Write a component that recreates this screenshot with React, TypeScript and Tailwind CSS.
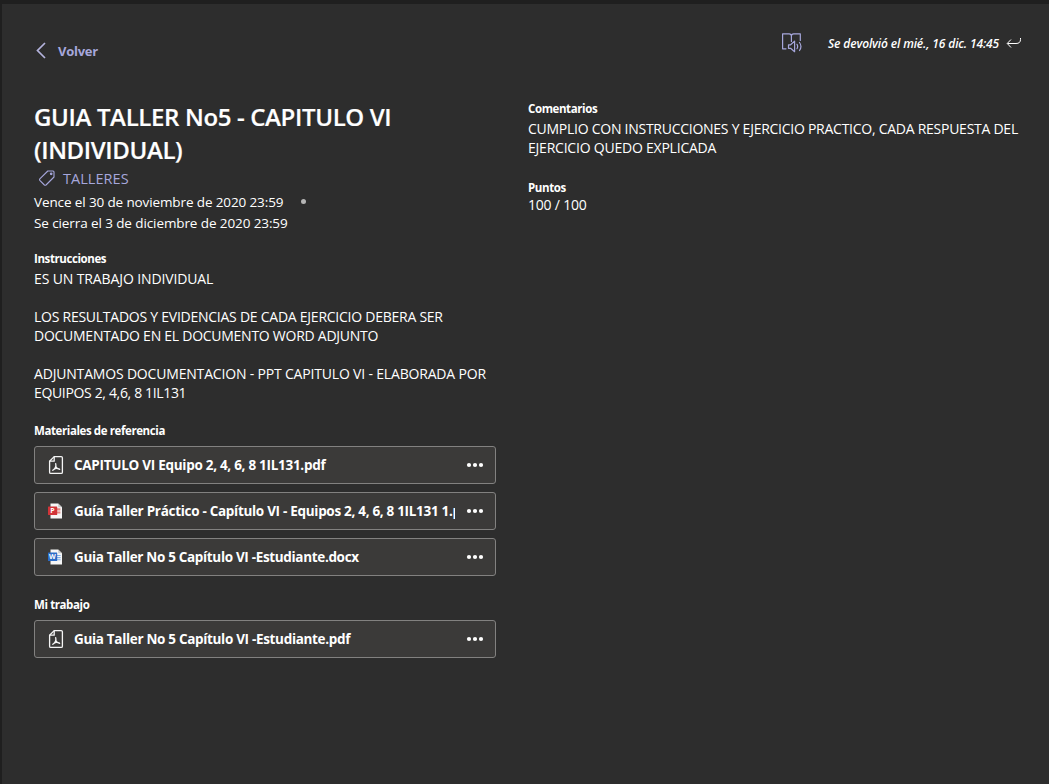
import type { ReactNode } from "react";

function Line({ children, className = "" }: { children?: ReactNode; className?: string }) {
  return (
    <div className="h-[19px] whitespace-nowrap">
      <span className={className}>{children}</span>
    </div>
  );
}

function Label({ children }: { children: ReactNode }) {
  return <h2 className="h-4 whitespace-nowrap text-[11.5px] leading-[15px] font-bold tracking-[-0.4px]">{children}</h2>;
}

function PdfIcon() {
  return (
    <svg width="16" height="20" viewBox="0 0 16 20" fill="none" stroke="#f5f5f5" strokeWidth="1.3" strokeLinejoin="round" strokeLinecap="round">
      <path d="M6.2 1.6H13.2Q14.4 1.6 14.4 2.8V17.2Q14.4 18.4 13.2 18.4H2.8Q1.6 18.4 1.6 17.2V6.2Z" />
      <path d="M6.2 1.8V6.2H1.8" />
      <path d="M7.7 8.6C8.4 11.4 7.4 13.6 4.8 15.3M8 11.8C8.8 13.3 9.8 14 11.6 14.3M6.4 13.8C7.8 13.2 9.2 13.1 11.2 13.9" />
    </svg>
  );
}

function OfficeIcon({ kind }: { kind: "P" | "W" }) {
  const ppt = kind === "P";
  return (
    <span className="relative block h-4 w-4">
      <svg width="16" height="16" viewBox="0 0 16 16">
        <path d="M2.5 0.5H10.2L14 4.3V15.5H2.5Z" fill="#f6f6f6" />
        <path d="M10.2 0.5V4.3H14Z" fill="#c9c9c9" />
        {ppt ? (
          <path d="M9 5.2H12.4V7.4H9ZM9 8.4H12.4V10.6H9Z" fill="#e58a86" />
        ) : (
          <path d="M9 5.9H12.6V7.1H9ZM9 8.1H12.6V9.3H9ZM9 10.2H12.6V11.2H9Z" fill="#7fb0e8" />
        )}
        <rect x="0" y="3.4" width="9.2" height="8.6" rx="0.6" fill={ppt ? "#d13438" : "#2b6cc8"} />
      </svg>
      <span className="absolute top-[4px] left-0 w-[9px] text-center text-[7px] leading-[8px] font-bold text-white">{kind}</span>
    </span>
  );
}

function FileCard({ icon, name, tracking }: { icon: ReactNode; name: string; tracking: string }) {
  return (
    <div className="flex h-[38px] w-[462px] items-center rounded-[3px] border border-[#828180] bg-[#3b3a39] pl-[13px]">
      <div className="flex w-[26px] items-center">{icon}</div>
      <div className="w-[381px] overflow-hidden whitespace-nowrap text-[13.5px] leading-[20px] font-bold">
        <span className={tracking}>{name}</span>
      </div>
      <svg className="ml-[11px]" width="18" height="6" viewBox="0 0 18 6" fill="#ffffff">
        <circle cx="3" cy="3" r="2.1" />
        <circle cx="9" cy="3" r="2.1" />
        <circle cx="15" cy="3" r="2.1" />
      </svg>
    </div>
  );
}

export default function App() {
  return (
    <div className="h-[784px] w-[1049px] overflow-hidden border-t-4 border-l-2 border-[#1f1f1f] bg-[#2d2d2d] font-['Open_Sans','Noto_Sans',sans-serif] text-[14px] leading-[19px] text-white">
      <header className="flex h-[96px] justify-between pr-[27px] pl-[32px]">
        <a className="mt-[37px] flex h-5 items-center text-[13px] font-bold text-[#a6a7dc]">
          <svg width="14" height="18" viewBox="0 0 14 18" fill="none" stroke="#b4b3dd" strokeWidth="1.7">
            <path d="M11 1L3.5 8.5L11 16" />
          </svg>
          <span className="ml-[10px] tracking-[-0.25px]">Volver</span>
        </a>
        <div className="mt-[28px] flex h-[22px] items-center">
          <svg width="22" height="22" viewBox="0 0 22 22" fill="none" stroke="#a6a7dc" strokeWidth="1.2" strokeLinejoin="round" strokeLinecap="round">
            <path d="M5 16.8H1.6V1.8H8.2Q10.4 1.8 10.4 3.9V9.5M10.4 3.9Q10.4 1.8 12.6 1.8H19.3V8.5" />
            <path d="M7.5 12.8H9.6L13.6 9.1V19.7L9.6 16.3H7.5Z" />
            <path d="M16 12.3Q17.3 14.5 16 16.7M18.5 10.5Q21.4 14.5 18.5 18.5" />
          </svg>
          <span className="ml-[25px] w-[172px] whitespace-nowrap text-[12px] font-semibold tracking-[-0.12px] italic">
            Se devolvió el mié., 16 dic. 14:45
          </span>
          <svg className="ml-[6px]" width="16" height="12" viewBox="0 0 16 12" fill="none" stroke="#ffffff" strokeWidth="1">
            <path d="M14.5 1V2.5Q14.5 6.5 10 6.5H1.5M5 2.5L1.2 6.5L5 10.5" />
          </svg>
        </div>
      </header>
      <main className="flex">
        <section className="ml-[32px] w-[462px]">
          <h1 className="h-[66px] whitespace-nowrap text-[24px] leading-[33px] font-semibold [-webkit-text-stroke:0.2px_white]">
            <span className="block tracking-[-0.35px]">GUIA TALLER No5 - CAPITULO VI</span>
            <span className="block tracking-[-0.38px]">(INDIVIDUAL)</span>
          </h1>
          <div className="mt-[2px] flex h-5 items-center text-[14.5px] text-[#a6a7dc]">
            <svg className="ml-[4px]" width="18" height="18" viewBox="0 0 18 18" fill="none" stroke="#a6a7dc" strokeWidth="1.1" strokeLinejoin="round">
              <path d="M9.8 2H15Q16 2 16 3V8L8 16Q7.2 16.6 6.4 16L1.8 11.4Q1.2 10.6 1.8 9.8Z" />
              <circle cx="13.2" cy="4.8" r="0.8" fill="#a6a7dc" />
            </svg>
            <span className="ml-[7px] tracking-[0.05px]">TALLERES</span>
          </div>
          <div className="mt-[4px] flex h-[21px] items-center whitespace-nowrap text-[13.5px]">
            <span className="w-[250px] tracking-[-0.12px]">Vence el 30 de noviembre de 2020 23:59</span>
            <span className="mb-[2px] ml-[17px] h-[5px] w-[5px] rounded-full bg-[#b5b5b5]" />
          </div>
          <div className="flex h-[21px] items-center whitespace-nowrap text-[13.5px]">
            <span className="tracking-[-0.1px]">Se cierra el 3 de diciembre de 2020 23:59</span>
          </div>
          <div className="mt-[17px]">
            <Label>Instrucciones</Label>
          </div>
          <div className="mt-[2px]">
            <Line className="tracking-[-0.12px]">ES UN TRABAJO INDIVIDUAL</Line>
            <Line />
            <Line className="tracking-[-0.25px]">LOS RESULTADOS Y EVIDENCIAS DE CADA EJERCICIO DEBERA SER</Line>
            <Line className="tracking-[-0.26px]">DOCUMENTADO EN EL DOCUMENTO WORD ADJUNTO</Line>
            <Line />
            <Line className="tracking-[-0.18px]">ADJUNTAMOS DOCUMENTACION - PPT CAPITULO VI - ELABORADA POR</Line>
            <Line className="tracking-[-0.34px]">EQUIPOS 2, 4,6, 8 1IL131</Line>
          </div>
          <div className="mt-[21px]">
            <Label>Materiales de referencia</Label>
          </div>
          <div className="mt-[7px] flex flex-col gap-2">
            <FileCard icon={<PdfIcon />} name="CAPITULO VI Equipo 2, 4, 6, 8 1IL131.pdf" tracking="tracking-[-0.28px]" />
            <FileCard icon={<OfficeIcon kind="P" />} name="Guía Taller Práctico - Capítulo VI - Equipos 2, 4, 6, 8 1IL131 1.pptx" tracking="tracking-[-0.3px]" />
            <FileCard icon={<OfficeIcon kind="W" />} name="Guia Taller No 5 Capítulo VI -Estudiante.docx" tracking="tracking-[-0.33px]" />
          </div>
          <div className="mt-[21px]">
            <Label>Mi trabajo</Label>
          </div>
          <div className="mt-[7px]">
            <FileCard icon={<PdfIcon />} name="Guia Taller No 5 Capítulo VI -Estudiante.pdf" tracking="tracking-[-0.32px]" />
          </div>
        </section>
        <section className="mt-px ml-[32px]">
          <Label>Comentarios</Label>
          <div className="mt-[2px]">
            <Line className="tracking-[-0.26px]">CUMPLIO CON INSTRUCCIONES Y EJERCICIO PRACTICO, CADA RESPUESTA DEL</Line>
            <Line className="tracking-[-0.22px]">EJERCICIO QUEDO EXPLICADA</Line>
          </div>
          <div className="mt-[23px]">
            <Label>Puntos</Label>
          </div>
          <div className="-mt-px">
            <Line className="tracking-[-0.2px]">100 / 100</Line>
          </div>
        </section>
      </main>
    </div>
  );
}
